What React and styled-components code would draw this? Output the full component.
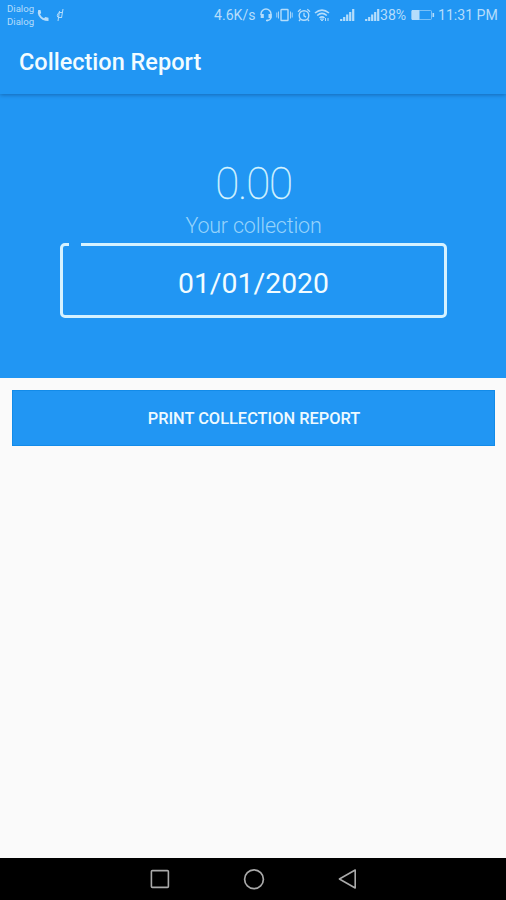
import React from 'react';
import styled, { createGlobalStyle } from 'styled-components';

const GlobalStyle = createGlobalStyle`
  * { box-sizing: border-box; }
  body { margin: 0; font-family: Roboto, "Liberation Sans", sans-serif; }
`;

const Screen = styled.div`
  display: flex;
  flex-direction: column;
  width: 506px;
  height: 900px;
  background: #fafafa;
  overflow: hidden;
`;

const Header = styled.header`
  flex: none;
  height: 94px;
  background: #2196f3;
  box-shadow: 0 1px 4px rgba(0, 40, 90, 0.4);
  z-index: 1;
`;

const StatusBar = styled.div`
  display: flex;
  justify-content: space-between;
  height: 30px;
  padding: 0 9px 0 7px;
  color: #b5ddfb;
`;

const StatusGroup = styled.div`
  display: flex;
  align-items: center;
`;

const Carriers = styled.div`
  display: flex;
  flex-direction: column;
  width: 28px;
  padding-top: 1px;
  font-size: 9.6px;
  line-height: 12.5px;
`;

const StatusText = styled.span`
  width: ${(p) => p.$width}px;
  margin-left: ${(p) => p.$gap || 0}px;
  font-size: 14.1px;
  line-height: 30px;
  white-space: nowrap;
`;

const Icon = styled.svg`
  display: block;
  flex: none;
  margin-left: ${(p) => p.$gap || 0}px;
  fill: none;
  stroke: currentColor;
  stroke-width: 1.4;
`;

const Title = styled.h1`
  margin: 0;
  padding-left: 19px;
  font-size: 23.5px;
  font-weight: 500;
  line-height: 65px;
  color: #f2fcff;
`;

const Summary = styled.section`
  display: flex;
  flex: none;
  flex-direction: column;
  align-items: center;
  height: 284px;
  padding-top: 62px;
  background: #2196f3;
`;

const Amount = styled.div`
  height: 54px;
  padding-left: 1px;
  font-size: 44px;
  font-weight: 100;
  line-height: 56px;
  letter-spacing: -1.3px;
  color: #d9f5ff;
  -webkit-text-stroke: 0.3px #d9f5ff;
`;

const Caption = styled.div`
  height: 33px;
  padding-left: 1px;
  font-size: 21.5px;
  font-weight: 300;
  line-height: 31px;
  letter-spacing: -0.2px;
  color: #96d3fb;
`;

const DateField = styled.fieldset`
  width: 387px;
  height: 75px;
  margin: 0;
  padding: 0 0 0 6px;
  border: 3px solid #d5f2ff;
  border-radius: 5px;
`;

const Notch = styled.legend`
  width: 12px;
  height: 3px;
  padding: 0;
`;

const DateValue = styled.div`
  padding-right: 5px;
  font-size: 28.4px;
  line-height: 75px;
  text-align: center;
  color: #f2fcff;
`;

const Content = styled.main`
  flex: 1;
  padding: 12px 11px 0 12px;
`;

const PrintButton = styled.button`
  display: block;
  width: 100%;
  height: 56px;
  padding: 1px 0 0 1px;
  border: 1px solid #128be9;
  background: #2196f3;
  font-family: inherit;
  font-size: 16.4px;
  font-weight: 500;
  color: #eefaff;
`;

const NavBar = styled.nav`
  display: flex;
  flex: none;
  justify-content: center;
  align-items: center;
  gap: 72px;
  height: 42px;
  padding-left: 1px;
  background: #000;
  color: #aaa;
`;

const PhoneIcon = () => (
  <Icon width="12" height="13" viewBox="0 0 12 13" $gap={2}>
    <path d="M1.2 1 L3.5 1 L4.2 4 L3 5.2 Q4.3 8 7 9.3 L8.3 8 L11.5 8.8 L11.5 12 Q4.5 12 1.5 6.4 Q.3 3.8 1.2 1Z" fill="currentColor" stroke="none" />
  </Icon>
);

const DialIcon = () => (
  <Icon width="10" height="14" viewBox="0 0 10 14" $gap={6}>
    <path d="M8 1 6.5 10M7.3 4.5H4.5Q2.6 5 2.3 7.5Q2.2 9.5 4 9.5H6.5M4.5 3 3 13" strokeWidth="1" />
  </Icon>
);

const HeadsetIcon = () => (
  <Icon width="14" height="14" viewBox="0 0 14 14" $gap={3}>
    <path d="M2 7V6a5 5 0 0 1 10 0v3q0 3-4 3.5" />
    <path d="M2.5 6v4M4 6v4M10.3 6v4M11.8 6v4M7 12.5h2" strokeWidth="1.6" />
  </Icon>
);

const VibrateIcon = () => (
  <Icon width="17" height="14" viewBox="0 0 17 14" $gap={3}>
    <rect x="5" y="1.5" width="7" height="11" rx=".6" />
    <path d="M2.5 3.5v7M.8 4.5v5M14.5 3.5v7M16.2 4.5v5" strokeWidth=".9" />
  </Icon>
);

const AlarmIcon = () => (
  <Icon width="14" height="14" viewBox="0 0 14 14" $gap={4}>
    <circle cx="7" cy="7.5" r="4.8" />
    <path d="M1 3.7 3.7 1.3M13 3.7 10.3 1.3M7 4.8v3l2 1.3M3.3 11.5 2 13M10.7 11.5 12 13" strokeWidth="1.3" />
  </Icon>
);

const WifiIcon = () => (
  <Icon width="17" height="15" viewBox="0 0 17 15" $gap={3}>
    <path d="M1 5Q8 -.8 15 5M3.2 7.5Q8 3.4 12.8 7.5M5.5 10Q8 7.8 10.5 10" strokeWidth="1.6" />
    <path d="m6.5 11 1.5 2 1.5-2zM11.5 10v3M14 10v3" strokeWidth="1" />
  </Icon>
);

const SignalIcon = ({ gap }) => (
  <Icon width="15" height="14" viewBox="0 0 15 14" $gap={gap}>
    <path d="M1.2 13v-2M4.2 13V9M7.2 13V6.5M10.2 13V4M13.2 13V1" strokeWidth="2.2" />
  </Icon>
);

const BatteryIcon = () => (
  <Icon width="24" height="12" viewBox="0 0 24 12" $gap={4}>
    <rect x="1" y="1.5" width="19.5" height="9" rx="1" strokeWidth="1" opacity=".6" />
    <path d="M1 1.5h7v9H1z" fill="currentColor" strokeWidth="1" />
    <path d="M22.3 4v4" strokeWidth="1.6" />
  </Icon>
);

const RecentsIcon = () => (
  <Icon width="22" height="22" viewBox="0 0 22 22">
    <rect x="2.4" y="2.6" width="17" height="16.8" rx="1" strokeWidth="1.6" />
  </Icon>
);

const HomeIcon = () => (
  <Icon width="22" height="22" viewBox="0 0 22 22">
    <circle cx="11" cy="11.2" r="9.4" strokeWidth="1.7" />
  </Icon>
);

const BackIcon = () => (
  <Icon width="22" height="22" viewBox="0 0 22 22">
    <path d="M18.2 2v18L2.4 11z" strokeWidth="1.6" strokeLinejoin="round" />
  </Icon>
);

export default function App() {
  return (
    <Screen>
      <GlobalStyle />
      <Header>
        <StatusBar>
          <StatusGroup>
            <Carriers>
              <span>Dialog</span>
              <span>Dialog</span>
            </Carriers>
            <PhoneIcon />
            <DialIcon />
          </StatusGroup>
          <StatusGroup>
            <StatusText $width={42}>4.6K/s</StatusText>
            <HeadsetIcon />
            <VibrateIcon />
            <AlarmIcon />
            <WifiIcon />
            <SignalIcon gap={9} />
            <SignalIcon gap={10} />
            <StatusText $width={27}>38%</StatusText>
            <BatteryIcon />
            <StatusText $width={59} $gap={3}>11:31 PM</StatusText>
          </StatusGroup>
        </StatusBar>
        <Title>Collection Report</Title>
      </Header>
      <Summary>
        <Amount>0.00</Amount>
        <Caption>Your collection</Caption>
        <DateField>
          <Notch />
          <DateValue>01/01/2020</DateValue>
        </DateField>
      </Summary>
      <Content>
        <PrintButton>PRINT COLLECTION REPORT</PrintButton>
      </Content>
      <NavBar>
        <RecentsIcon />
        <HomeIcon />
        <BackIcon />
      </NavBar>
    </Screen>
  );
}
